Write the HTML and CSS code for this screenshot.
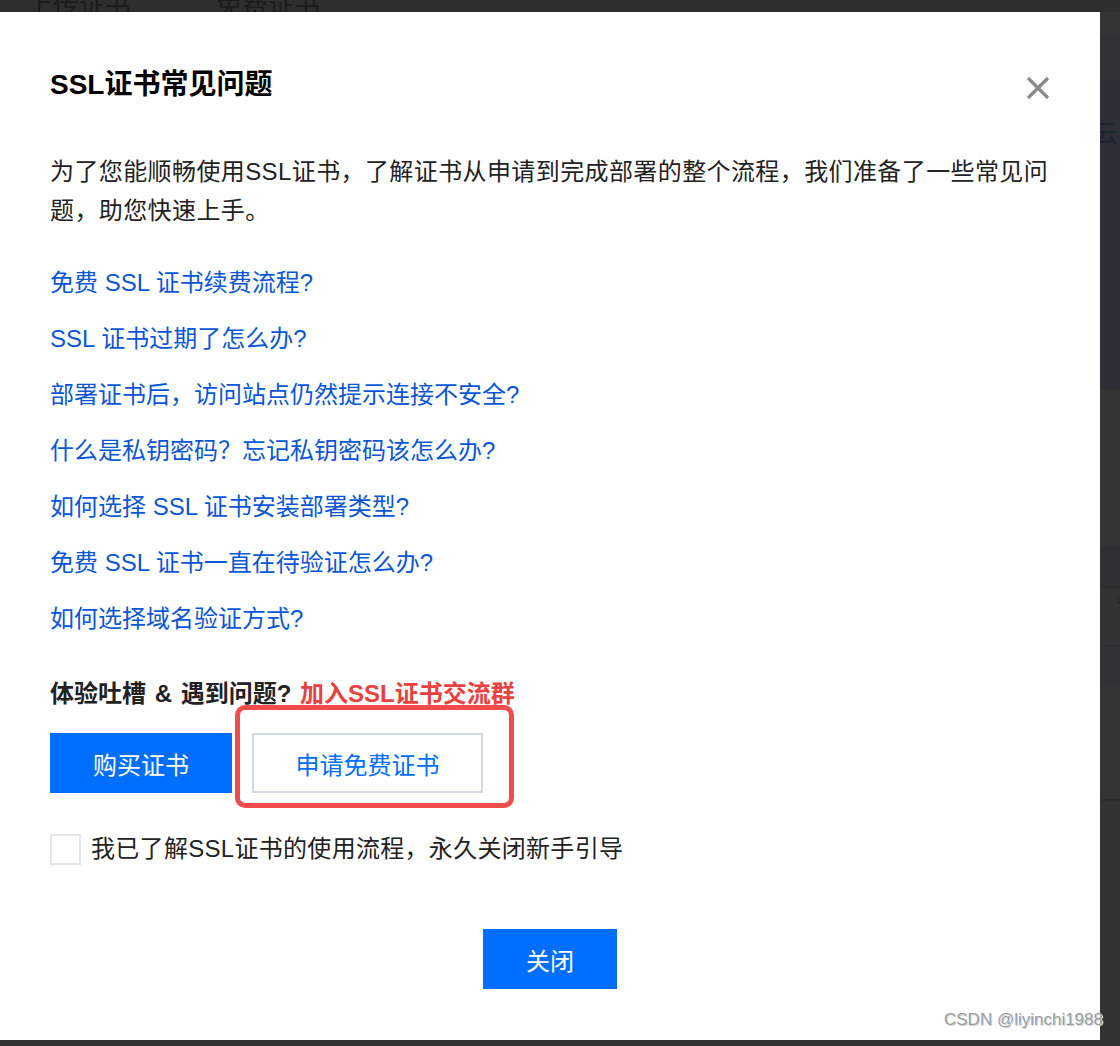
FILE: index.html
```html
<!DOCTYPE html>
<html lang="zh-CN">
<head>
  <meta charset="UTF-8" />
  <title>SSL证书常见问题</title>
  <link rel="stylesheet" href="styles.css">
</head>
<body>
  <div class="page">
    <div class="topbar">
      <span class="tab">上传证书</span>
      <span class="tab">免费证书</span>
    </div>
    <div class="main">
      <div class="dialog">
        <h2 class="dialog-title">SSL证书常见问题</h2>
        <button class="dialog-x" aria-label="关闭">
          <svg width="24" height="24" viewBox="0 0 24 24">
            <path d="M2 2 L22 22 M22 2 L2 22" stroke="#8a8a8a" stroke-width="3.2" fill="none" />
          </svg>
        </button>

        <p class="intro">为了您能顺畅使用SSL证书，了解证书从申请到完成部署的整个流程，我们准备了一些常见问题，助您快速上手。</p>

        <ul class="faq">
          <li><a href="#">免费 SSL 证书续费流程?</a></li>
          <li><a href="#">SSL 证书过期了怎么办?</a></li>
          <li><a href="#">部署证书后，访问站点仍然提示连接不安全?</a></li>
          <li><a href="#">什么是私钥密码？忘记私钥密码该怎么办?</a></li>
          <li><a href="#">如何选择 SSL 证书安装部署类型?</a></li>
          <li><a href="#">免费 SSL 证书一直在待验证怎么办?</a></li>
          <li><a href="#">如何选择域名验证方式?</a></li>
        </ul>

        <p class="feedback">体验吐槽 &amp; 遇到问题? <a href="#" class="group-link">加入SSL证书交流群</a></p>

        <div class="actions">
          <button class="btn btn-primary btn-buy">购买证书</button>
          <button class="btn btn-outline btn-free">申请免费证书</button>
        </div>
        <div class="mark-box"></div>

        <label class="check-row">
          <span class="checkbox"></span>
          <span>我已了解SSL证书的使用流程，永久关闭新手引导</span>
        </label>

        <div class="footer">
          <button class="btn btn-primary btn-close">关闭</button>
        </div>

        <div class="watermark">CSDN @liyinchi1988</div>
      </div>
      <div class="side">
        <div class="band b1"></div>
        <div class="band b2"></div>
        <div class="band b3"><span class="frag">云</span></div>
        <div class="band b4"></div>
        <div class="band b5"></div>
        <div class="band b6"><span class="frag">“</span></div>
        <div class="band b7"></div>
        <div class="band b8"></div>
        <div class="band b9"></div>
      </div>
    </div>
  </div>
</body>
</html>
```

FILE: styles.css
```css
body {
  margin: 0;
  background: #333;
  font-family: 'Liberation Sans', 'Noto Sans CJK SC', sans-serif;
  color: #222;
  width: 1120px;
  height: 1046px;
  overflow: hidden;
}
.page {
  display: flex;
  flex-direction: column;
}
.topbar {
  height: 12px;
  overflow: hidden;
  background: #2e2e2e;
  display: flex;
  gap: 85px;
  padding-left: 27px;
}
.tab {
  font-family: 'Noto Sans CJK SC', sans-serif;
  font-size: 26px;
  line-height: 26px;
  margin-top: -9px;
  color: #1b1b1b;
}
.main {
  display: flex;
  height: 1028px;
}
.dialog {
  position: relative;
  width: 1100px;
  flex: none;
  background: #fff;
  box-sizing: border-box;
  padding: 53px 50px 0;
}
.dialog-title {
  margin: 0;
  font-size: 28px;
  line-height: 40px;
  font-weight: 700;
  color: #000;
}
.dialog-x {
  position: absolute;
  top: 64px;
  right: 50px;
  width: 24px;
  height: 24px;
  padding: 0;
  border: none;
  background: none;
  cursor: pointer;
}
.dialog-x svg {
  display: block;
}
.intro {
  margin: 47px 0 0;
  font-size: 24px;
  line-height: 39px;
  letter-spacing: 0.4px;
}
.faq {
  list-style: none;
  margin: 25px 0 0;
  padding: 0;
}
.faq li {
  font-size: 24px;
  line-height: 56px;
}
.faq a {
  color: #0a56d6;
  text-decoration: none;
}
.feedback {
  margin: 27px 0 0;
  font-size: 24px;
  line-height: 40px;
  font-weight: 600;
  color: #222;
  word-spacing: 2px;
}
.group-link {
  color: #e8413f;
  font-weight: 700;
  text-decoration: none;
}
.actions {
  display: flex;
  gap: 20px;
  margin-top: 19px;
}
.btn {
  font-family: 'Noto Sans CJK SC', sans-serif;
  font-size: 24px;
  height: 60px;
  padding: 0;
  border: none;
  cursor: pointer;
}
.btn-primary {
  background: #006eff;
  color: #fff;
}
.btn-outline {
  background: #fff;
  color: #006eff;
  border: 2px solid #d3d9e2;
}
.btn-buy {
  width: 182px;
}
.btn-free {
  width: 231px;
}
.mark-box {
  position: absolute;
  left: 235px;
  top: 693px;
  width: 279px;
  height: 103px;
  box-sizing: border-box;
  border: 5px solid #f24b4b;
  border-radius: 10px;
  pointer-events: none;
}
.check-row {
  display: flex;
  align-items: center;
  gap: 10px;
  margin-top: 40px;
  font-size: 24px;
  line-height: 32px;
  letter-spacing: 0.3px;
}
.checkbox {
  width: 31px;
  height: 31px;
  box-sizing: border-box;
  border: 2px solid #e1e4ea;
  background: #fff;
}
.footer {
  display: flex;
  justify-content: center;
  margin-top: 64px;
}
.btn-close {
  width: 134px;
}
.watermark {
  position: absolute;
  right: -3px;
  bottom: 10px;
  font-size: 17px;
  color: #9a9a9a;
  text-shadow: 0 0 1px #fff, 1px 1px 0 #cfcfcf;
  white-space: nowrap;
  z-index: 2;
}
.side {
  flex: 1;
  display: flex;
  flex-direction: column;
  overflow: hidden;
}
.band {
  position: relative;
  overflow: hidden;
}
.b1 { height: 26px; background: #343434; }
.b2 { height: 42px; background: #2f3134; }
.b3 { height: 310px; background: #2c2f36; }
.b4 { height: 155px; background: #353535; }
.b5 { height: 42px; background: #2f3034; border-bottom: 1px solid #2a2a2a; }
.b6 { height: 57px; background: #333; border-bottom: 1px solid #2a2a2a; }
.b7 { height: 40px; background: #303236; }
.b8 { height: 113px; background: #343434; border-bottom: 2px solid #2c2c2c; }
.b9 { flex: 1; background: #333; }
.frag {
  position: absolute;
  left: -6px;
  font-family: 'Noto Sans CJK SC', sans-serif;
  font-size: 24px;
  line-height: 24px;
}
.b3 .frag {
  top: 40px;
  color: #1c2230;
}
.b6 .frag {
  top: 8px;
  left: 2px;
  color: #282828;
}
```
